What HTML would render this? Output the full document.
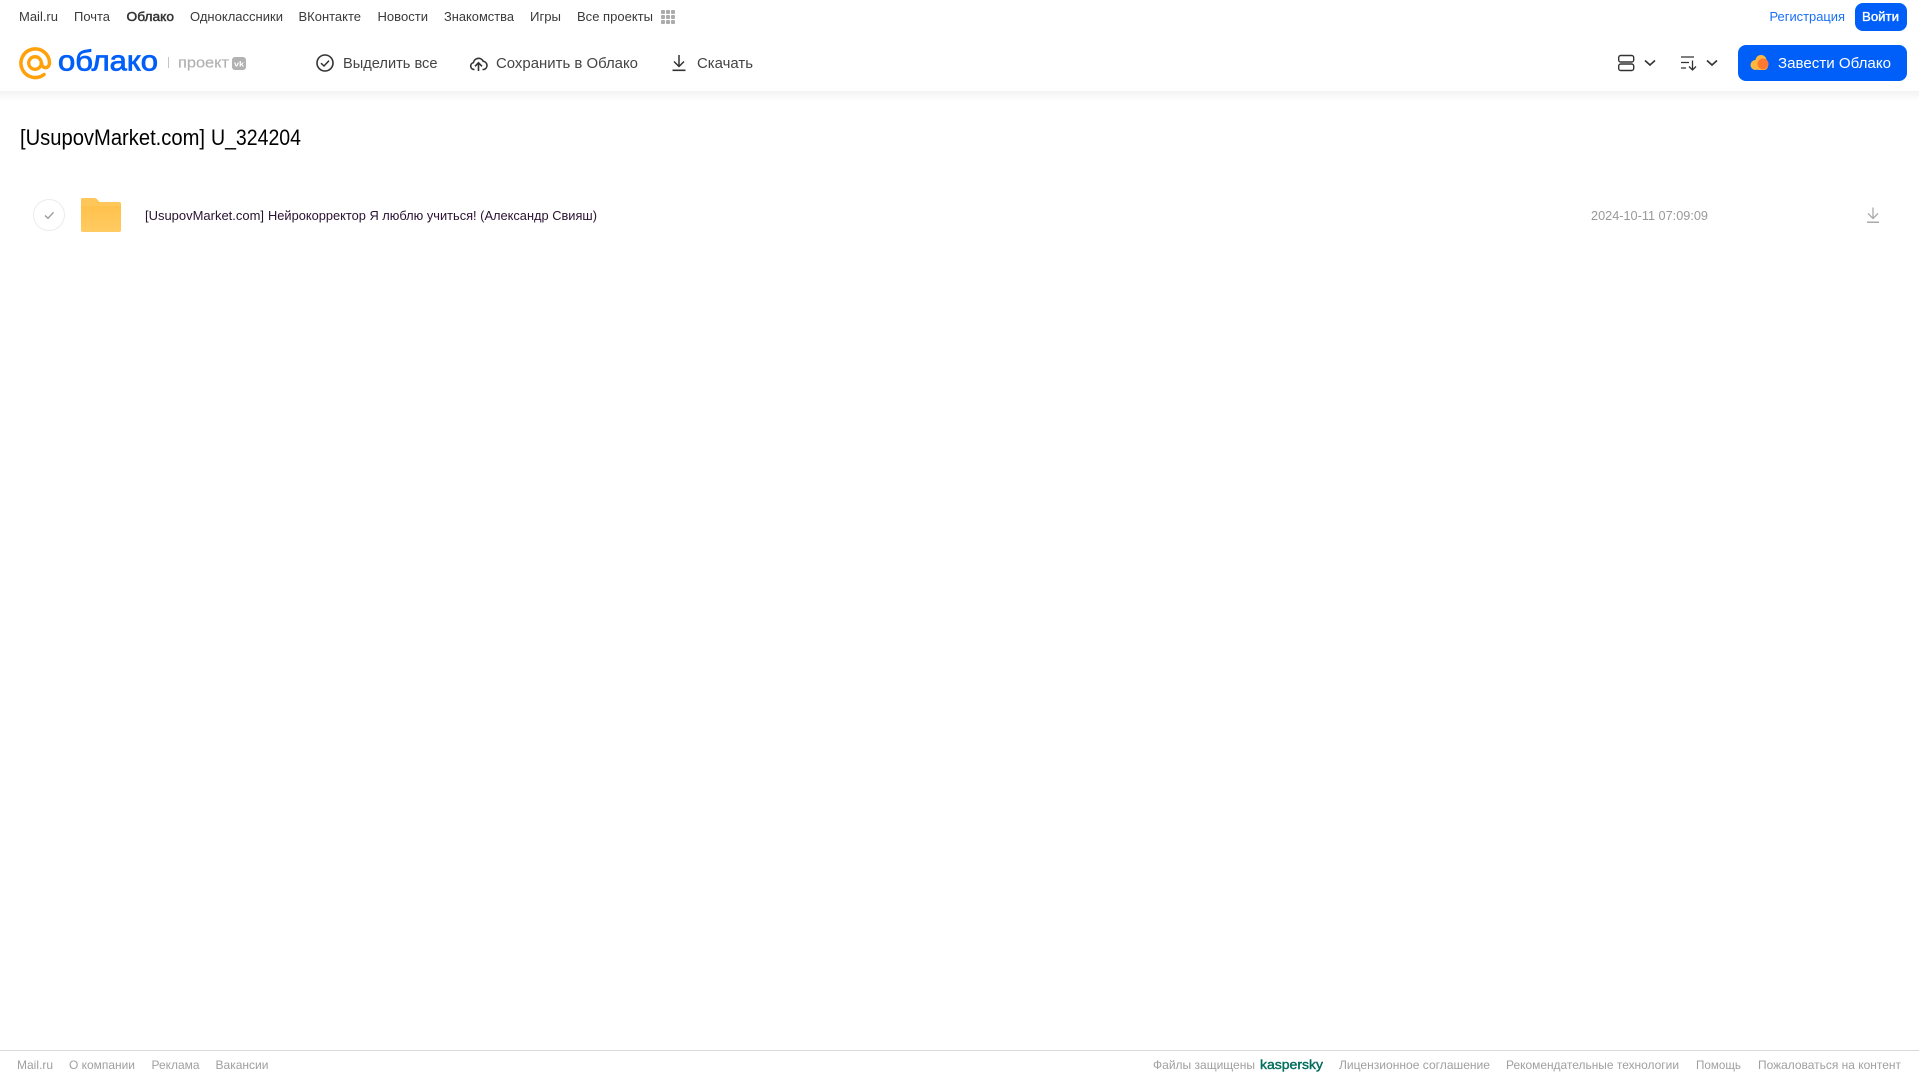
<!DOCTYPE html>
<html lang="ru">
<head>
<meta charset="utf-8">
<title>[UsupovMarket.com] U_324204</title>
<style>
html,body{margin:0;padding:0;background:#fff;width:1919px;height:1079px;overflow:hidden}
svg{display:block}
text{font-family:"Liberation Sans",Arial,sans-serif;white-space:pre}
.n{font-size:13px;fill:#3a3a3a}
.t{font-size:15px;fill:#444}
.f{font-size:12px;fill:#a0a0a0}
</style>
</head>
<body>
<svg xmlns="http://www.w3.org/2000/svg" width="1919" height="1079" viewBox="0 0 1919 1079">
<defs>
<linearGradient id="sh" x1="0" y1="0" x2="0" y2="1"><stop offset="0" stop-color="#f3f3f3"/><stop offset="1" stop-color="#fff"/></linearGradient>
<linearGradient id="fo" x1="0" y1="0" x2="0" y2="1"><stop offset="0" stop-color="#ffbe45"/><stop offset="1" stop-color="#ffcb62"/></linearGradient>
</defs>
<rect x="0" y="91" width="1919" height="10" fill="url(#sh)"/>

<!-- top nav -->
<text class="n" x="19" y="21" textLength="39" lengthAdjust="spacingAndGlyphs">Mail.ru</text>
<text class="n" x="74" y="21" textLength="36" lengthAdjust="spacingAndGlyphs">Почта</text>
<text class="n" x="126.500" y="21" textLength="47.500" lengthAdjust="spacingAndGlyphs" stroke="#333" stroke-width=".45" style="fill:#333">Облако</text>
<text class="n" x="190" y="21" textLength="93" lengthAdjust="spacingAndGlyphs">Одноклассники</text>
<text class="n" x="298.500" y="21" textLength="62.500" lengthAdjust="spacingAndGlyphs">ВКонтакте</text>
<text class="n" x="377.500" y="21" textLength="50.500" lengthAdjust="spacingAndGlyphs">Новости</text>
<text class="n" x="444" y="21" textLength="70" lengthAdjust="spacingAndGlyphs">Знакомства</text>
<text class="n" x="530" y="21" textLength="31" lengthAdjust="spacingAndGlyphs">Игры</text>
<text class="n" x="577" y="21" textLength="76" lengthAdjust="spacingAndGlyphs">Все проекты</text>
<g fill="#ababab">
<rect x="661" y="10" width="4" height="4" rx="1"/><rect x="666" y="10" width="4" height="4" rx="1"/><rect x="671" y="10" width="4" height="4" rx="1"/>
<rect x="661" y="15" width="4" height="4" rx="1"/><rect x="666" y="15" width="4" height="4" rx="1"/><rect x="671" y="15" width="4" height="4" rx="1"/>
<rect x="661" y="20" width="4" height="4" rx="1"/><rect x="666" y="20" width="4" height="4" rx="1"/><rect x="671" y="20" width="4" height="4" rx="1"/>
</g>
<text class="n" x="1769.500" y="21" textLength="75.500" lengthAdjust="spacingAndGlyphs" style="fill:#1a6ff5">Регистрация</text>
<rect x="1855" y="3" width="52" height="28" rx="8" fill="#005ff9"/>
<text class="n" x="1862" y="21" textLength="37" lengthAdjust="spacingAndGlyphs" stroke="#fff" stroke-width=".35" style="fill:#fff">Войти</text>

<!-- logo -->
<g fill="none" stroke="#ffa10a">
<path d="M44 74.500A14.300 14.300 0 1 1 49.500 62.500C49.500 69 42 69.500 41.500 63" stroke-width="3.500" stroke-linecap="round"/>
<circle cx="35" cy="63" r="6.300" stroke-width="3.300"/>
</g>
<text x="58" y="70.500" font-size="29" textLength="100" lengthAdjust="spacingAndGlyphs" fill="#005ff9" stroke="#005ff9" stroke-width=".8">облако</text>
<rect x="168" y="57" width="1" height="11" fill="#c4c4c4"/>
<text x="178" y="67.500" font-size="15" textLength="51" lengthAdjust="spacingAndGlyphs" fill="#b0b0b0" stroke="#b0b0b0" stroke-width=".15">проект</text>
<rect x="232" y="57" width="14" height="13" rx="3" fill="#b2b2b2"/>
<text x="234" y="66.500" font-size="7.500" font-weight="700" textLength="10" lengthAdjust="spacingAndGlyphs" fill="#fff">vk</text>

<!-- toolbar -->
<circle cx="325" cy="63" r="8" fill="none" stroke="#333" stroke-width="1.600"/>
<path d="M321 63.200l3 2.800 5-5.300" fill="none" stroke="#333" stroke-width="1.500"/>
<text class="t" x="343" y="68" textLength="94.500" lengthAdjust="spacingAndGlyphs">Выделить все</text>

<path d="M474.500 69.500h-.5a3.500 3.500 0 0 1-.6-6.900 5.200 5.200 0 0 1 9.800-1.300 4.200 4.200 0 0 1 .8 8.200h-1.500" fill="none" stroke="#333" stroke-width="1.600" stroke-linejoin="round"/>
<path d="M478.500 71v-8M475 66.300l3.500-3.500 3.500 3.500" fill="none" stroke="#333" stroke-width="1.600"/>
<text class="t" x="496" y="68" textLength="142" lengthAdjust="spacingAndGlyphs">Сохранить в Облако</text>

<path d="M679 55v11M674 61.500l5 5 5-5" fill="none" stroke="#333" stroke-width="1.500"/>
<rect x="672.500" y="69.500" width="13" height="1.600" fill="#333"/>
<text class="t" x="697" y="68" textLength="56" lengthAdjust="spacingAndGlyphs">Скачать</text>

<!-- view / sort -->
<g fill="none" stroke="#333" stroke-width="1.400">
<rect x="1618.700" y="55.500" width="15" height="6.500" rx="2"/>
<rect x="1618.700" y="64" width="15" height="6.500" rx="2"/>
<path d="M1645 60.500l5 4.500 5-4.500" stroke-width="1.600"/>
<path d="M1681 57h13M1681 62.500h8M1681 68h5M1692.500 60.500v9M1689 66.500l3.500 3.500 3.500-3.500" stroke-width="1.300"/>
<path d="M1707 60.500l5 4.500 5-4.500" stroke-width="1.600"/>
</g>

<!-- promo button -->
<rect x="1738" y="45" width="169" height="36" rx="8" fill="#005ff9"/>
<circle cx="1755.500" cy="65" r="5" fill="#ffb83f"/>
<circle cx="1761" cy="60.500" r="5.500" fill="#ffb83f"/>
<rect x="1755" y="62" width="13" height="8" rx="4" fill="#ffb83f"/>
<circle cx="1763" cy="64" r="5.500" fill="#ff7a30"/>
<text class="t" x="1778" y="68" textLength="113" lengthAdjust="spacingAndGlyphs" style="fill:#fff">Завести Облако</text>

<!-- title -->
<text x="20" y="145" font-size="22" textLength="185" lengthAdjust="spacingAndGlyphs" fill="#000">[UsupovMarket.com]</text>
<text x="211" y="145" font-size="22" textLength="90" lengthAdjust="spacingAndGlyphs" fill="#000">U_324204</text>

<!-- row -->
<circle cx="49" cy="215" r="15.500" fill="#fff" stroke="#ececec" stroke-width="1"/>
<path d="M45 215.500l3 2.800 5.500-6" fill="none" stroke="#999" stroke-width="1.400"/>
<path d="M81 200a2 2 0 0 1 2-2h10c3 0 4 1 5 2.500s1.500 1.500 3 1.500h18a2 2 0 0 1 2 2v26a2 2 0 0 1-2 2H83a2 2 0 0 1-2-2z" fill="url(#fo)"/>
<path d="M81 206v-6a2 2 0 0 1 2-2h10c3 0 4 1 5 2.500s1.500 1.500 3 1.500h18a2 2 0 0 1 2 2v2z" fill="#ffc75a"/>
<text x="145" y="220" font-size="13" textLength="119" lengthAdjust="spacingAndGlyphs" fill="#2a1232">[UsupovMarket.com]</text>
<text x="268" y="220" font-size="13" textLength="329" lengthAdjust="spacingAndGlyphs" fill="#2a1232">Нейрокорректор Я люблю учиться! (Александр Свияш)</text>
<text x="1591" y="220" font-size="13" textLength="117" lengthAdjust="spacingAndGlyphs" fill="#999">2024-10-11 07:09:09</text>
<path d="M1873 207.500v11M1868 213.500l5 5 5-5" fill="none" stroke="#aaa" stroke-width="1.300"/>
<rect x="1867" y="221.500" width="12" height="1.500" fill="#aaa"/>

<!-- footer -->
<rect x="0" y="1050" width="1919" height="1" fill="#d9d9d9"/>
<text class="f" x="17" y="1069" textLength="36" lengthAdjust="spacingAndGlyphs">Mail.ru</text>
<text class="f" x="69" y="1069" textLength="66" lengthAdjust="spacingAndGlyphs">О компании</text>
<text class="f" x="151.500" y="1069" textLength="48" lengthAdjust="spacingAndGlyphs">Реклама</text>
<text class="f" x="215.500" y="1069" textLength="53" lengthAdjust="spacingAndGlyphs">Вакансии</text>
<text class="f" x="1153" y="1069" textLength="102" lengthAdjust="spacingAndGlyphs">Файлы защищены</text>
<text x="1260" y="1069" font-size="13" textLength="63" lengthAdjust="spacingAndGlyphs" fill="#006d5c" stroke="#006d5c" stroke-width=".4">kaspersky</text>
<text class="f" x="1339" y="1069" textLength="151" lengthAdjust="spacingAndGlyphs">Лицензионное соглашение</text>
<text class="f" x="1506" y="1069" textLength="173" lengthAdjust="spacingAndGlyphs">Рекомендательные технологии</text>
<text class="f" x="1696" y="1069" textLength="45" lengthAdjust="spacingAndGlyphs">Помощь</text>
<text class="f" x="1758" y="1069" textLength="143" lengthAdjust="spacingAndGlyphs">Пожаловаться на контент</text>
</svg>
</body>
</html>
